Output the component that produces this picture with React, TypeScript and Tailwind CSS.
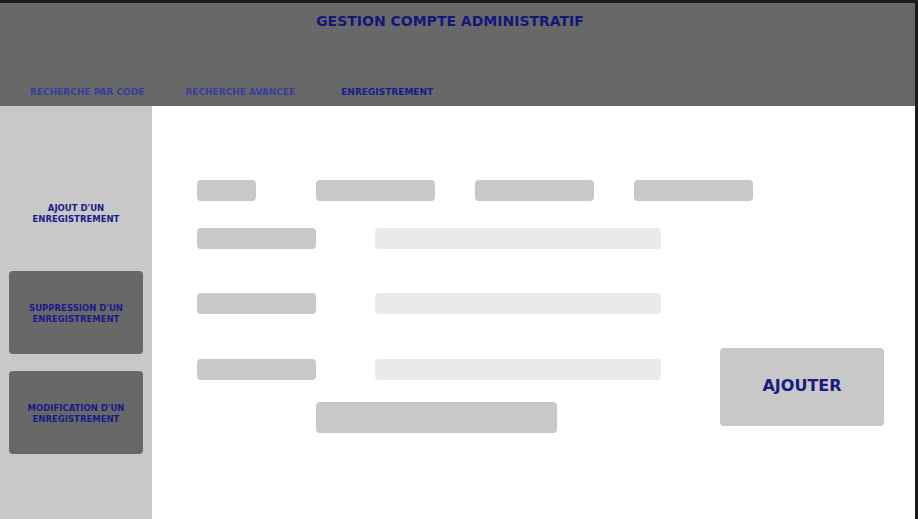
const tabs = [
  { label: "RECHERCHE PAR CODE", active: false },
  { label: "RECHERCHE AVANCEE", active: false },
  { label: "ENREGISTREMENT", active: true },
];

const sideItems = [
  { label: ["AJOUT D'UN", "ENREGISTREMENT"], active: true },
  { label: ["SUPPRESSION D'UN", "ENREGISTREMENT"], active: false },
  { label: ["MODIFICATION D'UN", "ENREGISTREMENT"], active: false },
];

const font = { fontFamily: "'DejaVu Sans', Verdana, sans-serif" };

function FieldRow() {
  return (
    <div className="flex">
      <div className="h-[21px] w-[119px] rounded-[4px] bg-[#c8c8c8]" />
      <div className="ml-[59px] h-[21px] w-[286px] rounded-[4px] bg-[#eaeaea]" />
    </div>
  );
}

export default function App() {
  return (
    <div
      className="flex h-[519px] w-[918px] flex-col bg-[#1c1c1c] pt-[3px] pr-[3px]"
      style={font}
    >
      {/* Header */}
      <header className="flex h-[103px] flex-col bg-[#686868]">
        <h1 className="mt-[10px] pr-[15px] text-center text-[14px] font-bold leading-[16px] text-[#15157a]">
          GESTION COMPTE ADMINISTRATIF
        </h1>
        <nav className="mt-auto mb-[8px] flex">
          {tabs.map((t, i) => (
            <span
              key={t.label}
              className={
                "text-[9px] font-bold leading-[11px] " +
                (t.active ? "text-[#1a1a8c]" : "text-[#3b3b9e]") +
                (i === 0 ? " ml-[30px]" : i === 1 ? " ml-[41px]" : " ml-[46px]")
              }
            >
              {t.label}
            </span>
          ))}
        </nav>
      </header>

      <div className="flex flex-1">
        {/* Sidebar */}
        <aside className="flex w-[152px] flex-col gap-[17px] bg-[#c8c8c8] pt-[65px] pl-[9px]">
          {sideItems.map((s) => (
            <button
              key={s.label[0]}
              className={
                "flex h-[83px] w-[134px] flex-col items-center justify-center rounded-[4px] pt-[2px] text-[8.5px] font-bold leading-[11px] text-[#1a1a8c] " +
                (s.active ? "bg-transparent" : "bg-[#686868]")
              }
            >
              <span>{s.label[0]}</span>
              <span>{s.label[1]}</span>
            </button>
          ))}
        </aside>

        {/* Main form */}
        <main className="flex-1 bg-white pt-[74px] pl-[45px]">
          <div className="flex">
            <div className="h-[21px] w-[59px] rounded-[4px] bg-[#c8c8c8]" />
            <div className="ml-[60px] h-[21px] w-[119px] rounded-[4px] bg-[#c8c8c8]" />
            <div className="ml-[40px] h-[21px] w-[119px] rounded-[4px] bg-[#c8c8c8]" />
            <div className="ml-[40px] h-[21px] w-[119px] rounded-[4px] bg-[#c8c8c8]" />
          </div>

          <div className="mt-[27px] flex">
            <div className="flex flex-col">
              <FieldRow />
              <div className="mt-[44px]">
                <FieldRow />
              </div>
              <div className="mt-[45px]">
                <FieldRow />
              </div>
              <div className="mt-[22px] ml-[119px] h-[31px] w-[241px] rounded-[4px] bg-[#c8c8c8]" />
            </div>
            <button className="mt-[120px] ml-[59px] flex h-[78px] w-[164px] items-center justify-center rounded-[4px] bg-[#c8c8c8] pb-[3px] text-[16px] font-bold text-[#1a1a80]">
              AJOUTER
            </button>
          </div>
        </main>
      </div>
    </div>
  );
}
